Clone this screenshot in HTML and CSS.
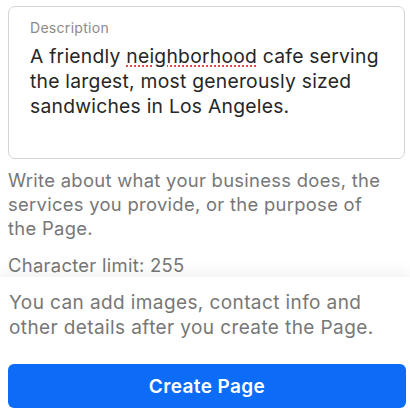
FILE: index.html
```html
<!DOCTYPE html>
<html lang="en">
<head>
    <meta charset="UTF-8">
    <meta name="viewport" content="width=device-width, initial-scale=1.0">
    <title>Create Page - Description</title>
    <link rel="stylesheet" href="styles.css">
</head>
<body>
    <div class="content">
        <div class="field">
            <label class="field-label" for="description">Description</label>
            <div class="field-text" id="description">A friendly <span class="misspelled">neighborhood</span> cafe serving the largest, most generously sized sandwiches in Los Angeles.</div>
        </div>
        <p class="hint">Write about what your business does, the services you provide, or the purpose of the Page.</p>
        <p class="limit">Character limit: 255</p>
    </div>

    <div class="footer">
        <p class="note">You can add images, contact info and other details after you create the Page.</p>
        <button class="primary" type="button">Create Page</button>
    </div>
</body>
</html>
```

FILE: styles.css
```css
body {
    font-family: 'Inter', 'Roboto', sans-serif;
    margin: 0;
    padding: 0;
    background-color: #fff;
    width: 410px;
    height: 415px;
    overflow: hidden;
}
.content {
    padding: 6px 5px 0 8px;
    height: 271px;
}
.field {
    padding: 11px 16px 0 21px;
    border: 1px solid #d4d4d4;
    border-radius: 7px;
    box-sizing: border-box;
    height: 153px;
}
.field-label {
    display: block;
    font-size: 14px;
    line-height: 19px;
    letter-spacing: 0.3px;
    color: #8a8a8a;
    margin-bottom: 7px;
}
.field-text {
    font-size: 19.3px;
    line-height: 25px;
    letter-spacing: 0.25px;
    color: #262626;
}
.misspelled {
    text-decoration: underline dotted #e0443e;
    text-underline-offset: 3px;
}
.hint, .limit, .note {
    margin: 0;
    font-size: 18.4px;
    line-height: 24px;
    letter-spacing: 0.3px;
    color: #777;
    padding-right: 14px;
}
.hint {
    margin-top: 9px;
}
.limit {
    margin-top: 13px;
}
.footer {
    position: relative;
    padding: 13px 4px 7px 8px;
    background-color: #fff;
    box-shadow: 0 -6px 14px rgba(0, 0, 0, 0.05);
}
.note {
    font-size: 19px;
    letter-spacing: 0.4px;
    line-height: 25px;
    padding-left: 1px;
    padding-right: 20px;
}
.primary {
    display: block;
    width: 100%;
    height: 44px;
    margin-top: 24px;
    color: white;
    background-color: #0c6cf7;
    border: none;
    border-radius: 6px;
    font-family: inherit;
    font-size: 19px;
    font-weight: 600;
    letter-spacing: 0.4px;
    cursor: pointer;
}
```
